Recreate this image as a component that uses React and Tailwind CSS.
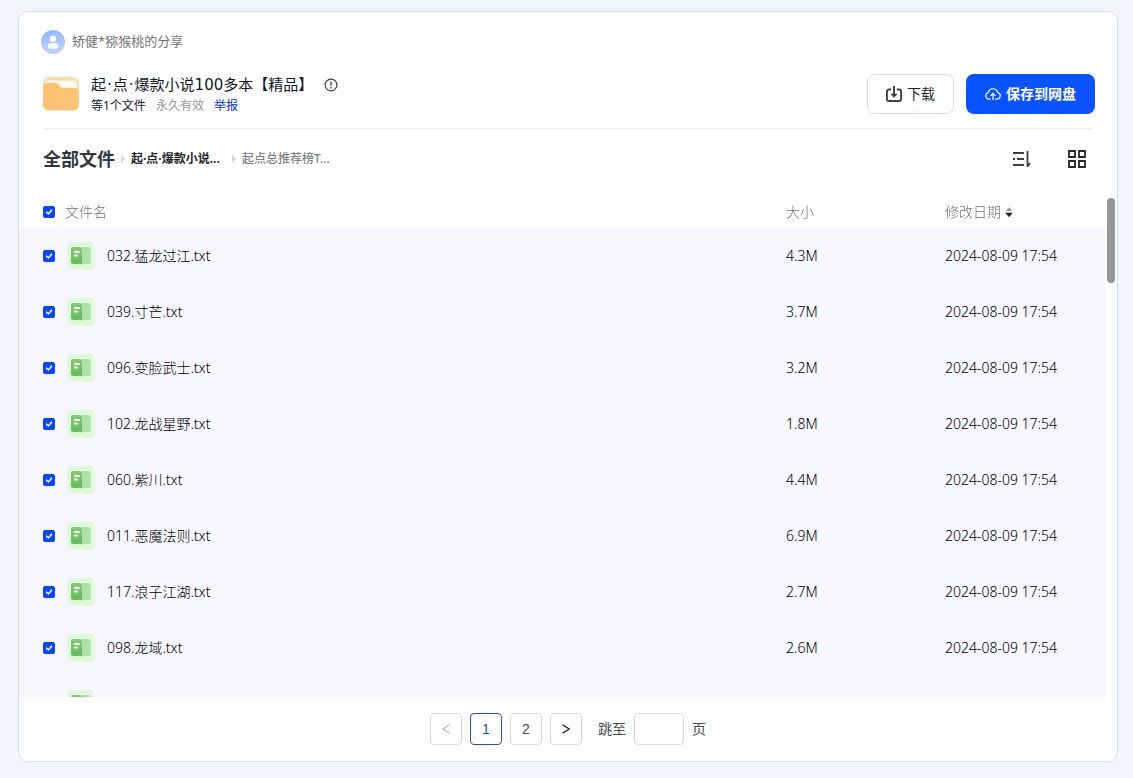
import { useState } from "react";

const FILES = [
  { name: "032.猛龙过江.txt", size: "4.3M", date: "2024-08-09 17:54" },
  { name: "039.寸芒.txt", size: "3.7M", date: "2024-08-09 17:54" },
  { name: "096.变脸武士.txt", size: "3.2M", date: "2024-08-09 17:54" },
  { name: "102.龙战星野.txt", size: "1.8M", date: "2024-08-09 17:54" },
  { name: "060.紫川.txt", size: "4.4M", date: "2024-08-09 17:54" },
  { name: "011.恶魔法则.txt", size: "6.9M", date: "2024-08-09 17:54" },
  { name: "117.浪子江湖.txt", size: "2.7M", date: "2024-08-09 17:54" },
  { name: "098.龙域.txt", size: "2.6M", date: "2024-08-09 17:54" },
  { name: "", size: "", date: "" },
];

function Checkbox({ id, label, checked, onChange }) {
  return (
    <span className="grid size-3 shrink-0 place-items-center">
      <input
        id={id}
        type="checkbox"
        aria-label={label}
        checked={checked}
        onChange={onChange}
        className="col-start-1 row-start-1 size-3 appearance-none rounded-[2px] border border-[#0b48f0] checked:bg-[#0b48f0]"
      />
      {checked && (
        <svg viewBox="0 0 12 12" className="pointer-events-none col-start-1 row-start-1 size-3" fill="none" stroke="#fff" strokeWidth="1.5">
          <path d="M3.2 5.8 5.4 8 8.9 3.8" />
        </svg>
      )}
    </span>
  );
}

function Avatar() {
  return (
    <svg viewBox="0 0 24 24" className="size-6" aria-hidden="true">
      <defs>
        <linearGradient id="avatar" x1="0" y1="0" x2="0" y2="1">
          <stop offset="0" stopColor="#8fb8fb" />
          <stop offset="1" stopColor="#c3d5fd" />
        </linearGradient>
      </defs>
      <circle cx="12" cy="12" r="12" fill="url(#avatar)" />
      <circle cx="12" cy="8.7" r="3.2" fill="#fff" />
      <path d="M6.8 16.3c0-2 1.700-3.200 3.600-3.200h3.200c1.900 0 3.600 1.200 3.600 3.200 0 1.700-1.100 2.500-2.700 2.500h-5c-1.600 0-2.700-.8-2.700-2.500z" fill="#fff" />
    </svg>
  );
}

function Folder() {
  return (
    <svg viewBox="0 0 36 34" className="h-[34px] w-9" aria-hidden="true">
      <defs>
        <linearGradient id="folder" x1="0" y1="0" x2="1" y2="1">
          <stop offset="0" stopColor="#ffbd6e" />
          <stop offset="1" stopColor="#fdc77c" />
        </linearGradient>
      </defs>
      <rect width="36" height="30" rx="6" fill="#ffdba8" />
      <path d="M3 6a3 3 0 0 1 3-2.500h24A4 4 0 0 1 34 7.500V14H3z" fill="#fff8ee" />
      <path d="M0 10.500a4.500 4.500 0 0 1 4.500-4.500h7.200c1.200 0 2 .3 2.900 1.100l3.200 2.900c.9.800 1.700 1 2.900 1H31.500a4.500 4.500 0 0 1 4.500 4.500V28a5.500 5.500 0 0 1-5.500 5.500h-25A5.500 5.500 0 0 1 0 28z" fill="url(#folder)" />
    </svg>
  );
}

function BookIcon() {
  return (
    <svg viewBox="0 0 28 28" className="size-7 shrink-0" aria-hidden="true">
      <defs>
        <linearGradient id="book" x1="0" y1="0" x2="0" y2="1">
          <stop offset="0" stopColor="#86ca7b" />
          <stop offset="1" stopColor="#69b95e" />
        </linearGradient>
      </defs>
      <rect width="28" height="28" rx="5" fill="#e1fadd" />
      <path d="M14 5h7.500A2.500 2.500 0 0 1 24 7.500v12a2.500 2.500 0 0 1-2.500 2.500H14z" fill="#b0dfa8" />
      <path d="M4 7.500A2.500 2.500 0 0 1 6.500 5h6.200A2.300 2.300 0 0 1 15 7.300v15.400L13.600 22H6.500A2.500 2.500 0 0 1 4 19.500z" fill="url(#book)" />
      <path d="M7 10h5.500M7 13.700h3.800" stroke="#fff" strokeWidth="1.800" />
    </svg>
  );
}

function Arrow() {
  return (
    <svg viewBox="0 0 4 8" className="h-2 w-1" aria-hidden="true">
      <path d="M0 0 4 4 0 8z" fill="#d3d5da" />
    </svg>
  );
}

const pageButton = "flex size-8 items-center justify-center rounded border bg-white font-['Liberation_Sans',sans-serif] text-sm";

export default function App() {
  const [selected, setSelected] = useState(FILES.map(() => true));
  const [page, setPage] = useState(1);
  const all = selected.every(Boolean);

  return (
    <div className="flex h-screen flex-col bg-[#f1f5ff] pt-[11px] pr-[15px] pb-4 pl-[18px] font-['Noto_Sans','Noto_Sans_CJK_SC',sans-serif] text-[#25262b]">
      <main className="flex min-h-0 flex-1 flex-col rounded-[10px] border border-[#d9dce3] bg-white">
        <header className="pt-[18px] pr-[22px] pl-6">
          <div className="-ml-0.5 flex h-6 items-center gap-[7px] text-[13px] leading-5 text-[#757575]">
            <Avatar />
            <span className="pb-0.5">矫健*猕猴桃的分享</span>
          </div>
          <div className="mt-5 flex h-10 items-center">
            <Folder />
            <div className="ml-3 flex-1 pt-0.5">
              <h1 className="flex items-center gap-[11px] text-[15px] leading-[22px] text-[#101726]">
                <span className="font-['DejaVu_Sans','Noto_Sans_CJK_SC',sans-serif]">
                  起<span className="mx-px">·</span>点<span className="mx-px">·</span>爆款小说100多本【精品】
                </span>
                <svg viewBox="0 0 14 14" className="size-3.5" fill="none" stroke="#3c3e44" strokeWidth="1.200" aria-hidden="true">
                  <circle cx="7" cy="7" r="5.900" />
                  <path d="M7 3.500v4.300M7 9v1.500" strokeWidth="1.400" />
                </svg>
              </h1>
              <p className="flex gap-2.5 text-xs leading-5 text-[#101726]">
                <span>等1个文件</span>
                <span className="text-[#999]">永久有效</span>
                <a href="#report" className="text-[#0b2fe8]">举报</a>
              </p>
            </div>
            <div className="flex gap-3">
              <button type="button" className="flex h-10 items-center gap-[5px] rounded-lg border border-[#dadbde] px-[18px] text-sm text-[#25262b]">
                <svg viewBox="0 0 16 16" className="size-4" fill="none" stroke="#3c3e44" strokeWidth="1.900" aria-hidden="true">
                  <path d="M5.200 3.500H3A2.100 2.100 0 0 0 .9 5.600v7.300A2.100 2.100 0 0 0 3 15h10a2.100 2.100 0 0 0 2.100-2.100V5.600A2.100 2.100 0 0 0 13 3.500h-2.200" />
                  <path d="M8 0v10M5.500 7.800 8 10.300l2.500-2.500" />
                </svg>
                下载
              </button>
              <button type="button" className="flex h-10 items-center gap-[5px] rounded-lg bg-[#0b53ff] px-[19px] text-sm font-bold text-white">
                <svg viewBox="0 0 16 16" className="size-4" fill="none" stroke="#fff" strokeWidth="1.200" aria-hidden="true">
                  <path d="M5.700 13.200H4.300A3.400 3.400 0 0 1 3.400 6.500a4.700 4.700 0 0 1 9.200 0 3.400 3.400 0 0 1-.9 6.700h-1.400" />
                  <path d="M8 14V7.500M5.500 9.800 8 7.300l2.500 2.500" />
                </svg>
                保存到网盘
              </button>
            </div>
          </div>
          <div className="mt-3.5 mr-0.5 h-px bg-[#ececee]" />
        </header>

        <div className="flex h-[67px] shrink-0 items-start justify-between pt-4 pr-[31px] pl-6">
          <nav className="flex h-7 items-center text-xs">
            <a href="#all" className="text-lg leading-7 font-bold text-[#303742]">全部文件</a>
            <span className="mx-1.5"><Arrow /></span>
            <a href="#folder" className="font-bold text-[#25262b]">起·点·爆款小说...</a>
            <span className="mr-1.5 ml-3"><Arrow /></span>
            <a href="#current" className="font-medium text-[#818285]">起点总推荐榜T...</a>
          </nav>
          <div className="flex h-7 items-center gap-[37px]">
            <button type="button" aria-label="排序">
              <svg viewBox="0 0 19 18" className="h-[18px] w-[19px]" fill="none" stroke="#3c3e44" strokeWidth="1.800" aria-hidden="true">
                <path d="M1 3h11M1 9h2M5 9h7M1 15h11M15.500 1v16M15.500 16.500l2.500-3.500" />
              </svg>
            </button>
            <button type="button" aria-label="网格视图">
              <svg viewBox="0 0 18 18" className="size-[18px]" fill="none" stroke="#25262b" strokeWidth="1.800" aria-hidden="true">
                <path d="M1 1h6v6H1zM11 1h6v6h-6zM1 11h6v6H1zM11 11h6v6h-6z" />
              </svg>
            </button>
          </div>
        </div>

        <div className="flex min-h-0 flex-1">
          <div className="min-w-0 flex-1 overflow-y-auto [scrollbar-width:none]">
            <table className="w-full table-fixed border-collapse text-left text-sm font-light text-black">
              <thead className="sticky top-0 bg-white text-[#707174]">
                <tr className="h-8">
                  <th className="p-0 pl-6 font-light">
                    <span className="flex items-center gap-2.5">
                      <Checkbox id="all-files" label="全选" checked={all} onChange={() => setSelected(FILES.map(() => !all))} />
                      <label htmlFor="all-files">文件名</label>
                    </span>
                  </th>
                  <th className="w-[159px] p-0 font-light">大小</th>
                  <th className="w-40 p-0 font-light">
                    <span className="flex items-center gap-1">
                      修改日期
                      <svg viewBox="0 0 8 10" className="h-2.5 w-2" aria-hidden="true">
                        <path d="M.8 4 4 .2 7.200 4z" fill="#9a9a9a" />
                        <path d="M.8 6h6.400L4 9.800z" fill="#222" stroke="#222" strokeWidth=".6" />
                      </svg>
                    </span>
                  </th>
                </tr>
              </thead>
              <tbody className="bg-[#f6f7ff]">
                {FILES.map((file, i) => (
                  <tr key={i} className="h-14">
                    <td className="p-0 pl-6">
                      <span className="flex items-center gap-3">
                        <Checkbox
                          id={`file-${i}`}
                          checked={selected[i]}
                          onChange={() => setSelected(selected.map((s, j) => (j === i ? !s : s)))}
                        />
                        <BookIcon />
                        <label htmlFor={`file-${i}`}>{file.name}</label>
                      </span>
                    </td>
                    <td className="p-0">{file.size}</td>
                    <td className="p-0">{file.date}</td>
                  </tr>
                ))}
              </tbody>
            </table>
          </div>
          <div className="w-3 pt-0.5 pl-0.5">
            <div className="h-[85px] w-2 rounded-full bg-[#979797]" />
          </div>
        </div>

        <footer className="flex shrink-0 items-center justify-center gap-2 py-4 text-sm text-[#4a4b50]">
          <button type="button" aria-label="上一页" disabled={page === 1} onClick={() => setPage(1)} className={`${pageButton} border-[#d9d9d9] text-[#b8b8b8]`}>
            <svg viewBox="0 0 10 10" className="size-2.5" fill="none" stroke="currentColor" strokeWidth="1.200" aria-hidden="true">
              <path d="M8.500 .8 1.800 5l6.700 4.200" />
            </svg>
          </button>
          {[1, 2].map((n) => (
            <button key={n} type="button" onClick={() => setPage(n)} className={`${pageButton} ${page === n ? "border-[#1f4fc4] text-[#1f4fc4]" : "border-[#d9d9d9]"}`}>
              {n}
            </button>
          ))}
          <button type="button" aria-label="下一页" onClick={() => setPage(2)} className={`${pageButton} border-[#d9d9d9] text-[#222]`}>
            <svg viewBox="0 0 10 10" className="size-2.5" fill="none" stroke="currentColor" strokeWidth="1.300" aria-hidden="true">
              <path d="M1.500 .8 8.200 5 1.500 9.200" />
            </svg>
          </button>
          <label htmlFor="jump" className="ml-2">跳至</label>
          <input id="jump" type="text" className="h-8 w-[50px] rounded border border-[#d9d9d9] px-2" />
          <span>页</span>
        </footer>
      </main>
    </div>
  );
}
